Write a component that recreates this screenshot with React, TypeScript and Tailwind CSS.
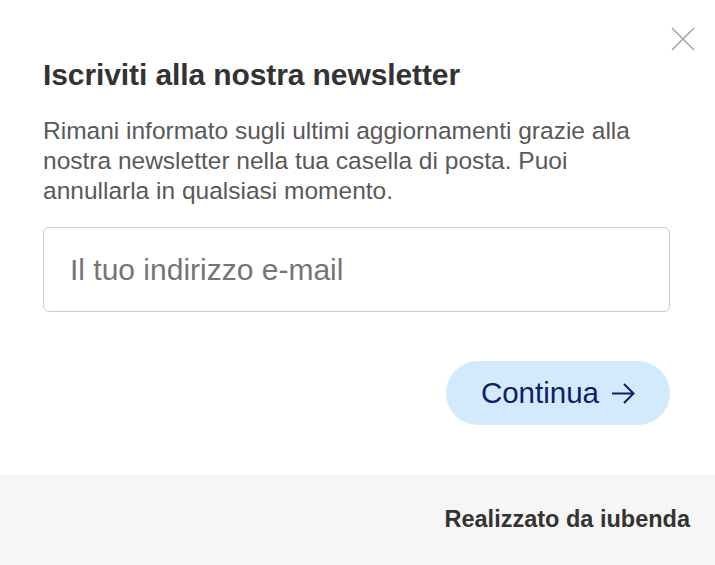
export default function App() {
  return (
    <div className="w-[715px] h-[565px] bg-white flex flex-col font-['Liberation_Sans',Arial,sans-serif]">
      <div className="relative flex-1 pl-[43px] pr-[45px] pt-[57px]">
        <button className="absolute top-[27px] right-[20px] w-[24px] h-[24px] flex items-center justify-center" aria-label="Chiudi">
          <svg width="24" height="24" viewBox="0 0 24 24" fill="none" stroke="#a6a6a6" strokeWidth="1.6">
            <path d="M1 1 L23 23 M23 1 L1 23" />
          </svg>
        </button>
        <h2 className="text-[30px] leading-[36px] font-bold text-[#333333] tracking-[-0.1px]">Iscriviti alla nostra newsletter</h2>
        <p className="mt-[23px] text-[24.5px] leading-[30px] text-[#595959]">
          Rimani informato sugli ultimi aggiornamenti grazie alla nostra newsletter nella tua casella di posta. Puoi annullarla in qualsiasi momento.
        </p>
        <input
          type="email"
          placeholder="Il tuo indirizzo e-mail"
          className="mt-[21px] block w-full h-[85px] border border-[#cccccc] rounded-[6px] px-[26px] text-[30px] text-[#333333] placeholder:text-[#757575] outline-none"
        />
        <div className="mt-[49px] flex justify-end">
          <button className="h-[64px] px-[35px] rounded-full bg-[#d3eafc] text-[#0b2168] text-[29.5px] flex items-center gap-[13px]">
            <span>Continua</span>
            <svg width="23" height="21" viewBox="0 0 23 21" fill="none" stroke="#0b2168" strokeWidth="2">
              <path d="M0 10.5 H21.5 M12 1 L21.5 10.5 L12 20" />
            </svg>
          </button>
        </div>
      </div>
      <div className="h-[91px] bg-[#f6f6f6] flex items-center justify-end pr-[25px]">
        <span className="text-[23.5px] font-bold text-[#333333]">Realizzato da iubenda</span>
      </div>
    </div>
  );
}
